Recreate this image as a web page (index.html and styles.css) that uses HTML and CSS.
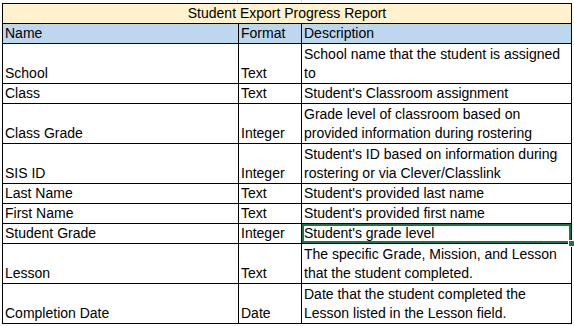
FILE: index.html
```html
<!DOCTYPE html>
<html lang="en">
<head>
    <meta charset="UTF-8">
    <meta name="viewport" content="width=device-width, initial-scale=1.0">
    <title>Student Export Progress Report</title>
    <link rel="stylesheet" href="styles.css">
</head>
<body>
    <div class="sheet">
        <table class="report">
            <colgroup>
                <col class="col-name">
                <col class="col-format">
                <col class="col-desc">
            </colgroup>
            <tr class="title"><td colspan="3">Student Export Progress Report</td></tr>
            <tr class="head"><td>Name</td><td>Format</td><td>Description</td></tr>
            <tr class="tall"><td>School</td><td>Text</td><td>School name that the student is assigned<br>to</td></tr>
            <tr><td>Class</td><td>Text</td><td>Student's Classroom assignment</td></tr>
            <tr class="tall"><td>Class Grade</td><td>Integer</td><td>Grade level of classroom based on<br>provided information during rostering</td></tr>
            <tr class="tall"><td>SIS ID</td><td>Integer</td><td>Student's ID based on information during<br>rostering or via Clever/Classlink</td></tr>
            <tr><td>Last Name</td><td>Text</td><td>Student's provided last name</td></tr>
            <tr><td>First Name</td><td>Text</td><td>Student's provided first name</td></tr>
            <tr><td>Student Grade</td><td>Integer</td><td class="selected">Student's grade level<span class="handle"></span></td></tr>
            <tr class="tall"><td>Lesson</td><td>Text</td><td>The specific Grade, Mission, and Lesson<br>that the student completed.</td></tr>
            <tr class="tall"><td>Completion Date</td><td>Date</td><td>Date that the student completed the<br>Lesson listed in the Lesson field.</td></tr>
        </table>
    </div>
</body>
</html>
```

FILE: styles.css
```css
body{
    margin: 0;
    background: #fff;
    font-family: "Liberation Sans", Arial, sans-serif;
    font-size: 14px;
    color: #000;
}
.sheet{
    padding: 3px 0 0 2px;
    background-image: linear-gradient(to right, transparent 237px, #e1e1e1 237px, #e1e1e1 238px, transparent 238px, transparent 301px, #e1e1e1 301px, #e1e1e1 302px, transparent 302px);
    background-size: 100% 3px;
    background-repeat: no-repeat;
}
.report{
    border-collapse: collapse;
    table-layout: fixed;
    width: 570px;
}
.col-name{ width: 236px; }
.col-format{ width: 63px; }
.col-desc{ width: 270px; }
tr{
    height: 20px;
}
tr.tall{
    height: 40px;
}
td{
    border: 1px solid #000;
    padding: 0 2px;
    line-height: 19px;
    vertical-align: bottom;
    white-space: nowrap;
    overflow: hidden;
}
.title td{
    background: #fff2cc;
    text-align: center;
}
.head td{
    background: #bdd7ee;
}
.selected{
    position: relative;
    overflow: visible;
    box-shadow: inset 0 0 0 2px #217346;
}
.handle{
    position: absolute;
    right: -4px;
    bottom: -4px;
    width: 5px;
    height: 5px;
    background: #217346;
    border: 1px solid #fff;
}
```
